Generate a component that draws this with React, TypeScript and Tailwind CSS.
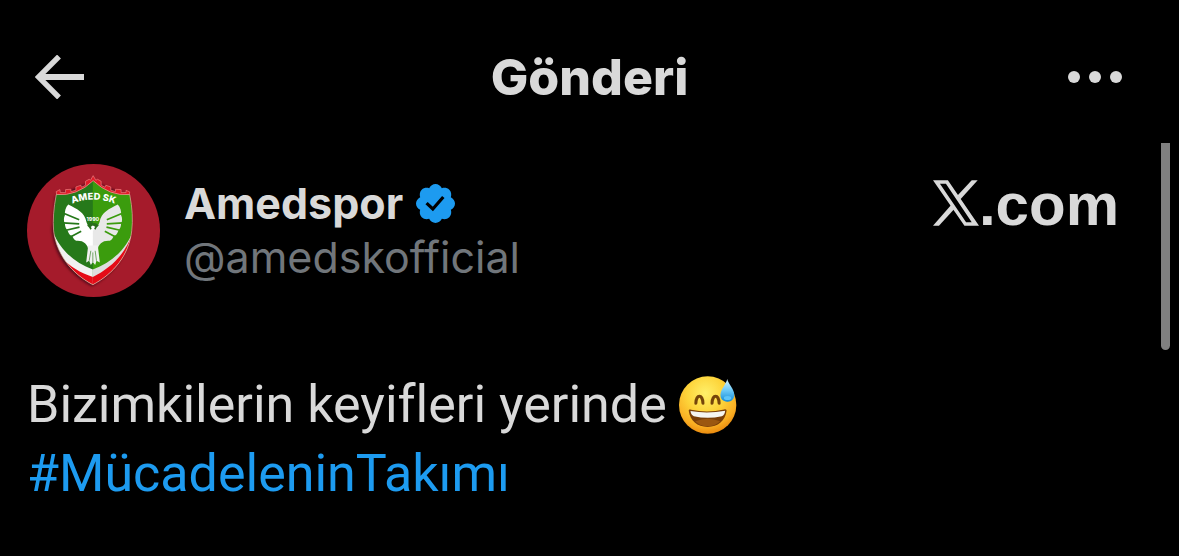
const BackIcon = () => (
  <svg viewBox="0 0 50 44" className="w-[50px] h-11" fill="none" stroke="currentColor" aria-hidden="true">
    <path d="M24 1.5L3.5 22L24 42.5" strokeWidth="5.4" />
    <path d="M5 22H49" strokeWidth="6" />
  </svg>
);

const MoreIcon = () => (
  <svg viewBox="0 0 54 12" className="w-[54px] h-3" fill="currentColor" aria-hidden="true">
    <circle cx="6" cy="6" r="6" />
    <circle cx="27" cy="6" r="6" />
    <circle cx="48" cy="6" r="6" />
  </svg>
);

const VerifiedBadge = () => (
  <svg viewBox="1.75 1.75 20.5 20.5" className="size-[39px] shrink-0" role="img" aria-label="Onaylı hesap">
    <path
      fill="#1d9bf0"
      d="M22.25 12c0-1.43-.88-2.67-2.19-3.34.46-1.39.2-2.9-.81-3.91s-2.52-1.27-3.91-.81c-.66-1.31-1.91-2.19-3.34-2.19s-2.67.88-3.33 2.19c-1.4-.46-2.91-.2-3.92.81s-1.26 2.52-.8 3.91c-1.31.67-2.2 1.91-2.2 3.34s.89 2.67 2.2 3.34c-.46 1.39-.21 2.9.8 3.91s2.52 1.26 3.91.81c.67 1.31 1.91 2.19 3.34 2.19s2.68-.88 3.34-2.19c1.39.45 2.9.2 3.91-.81s1.27-2.52.81-3.91c1.31-.67 2.19-1.91 2.19-3.34z"
    />
    <path d="M7.3 11.8l3.3 3.1 5.5-6.3" fill="none" stroke="#000" strokeWidth="1.7" />
  </svg>
);

const XLogo = () => (
  <svg viewBox="38 150 139 138" className="size-[46px]" fill="currentColor" aria-hidden="true">
    <path fillRule="evenodd" d="M38 150H83L177 288H133ZM59 161L138 277H155L77 161Z" />
    <path d="M155 150H173L121 208L112 196Z" />
    <path d="M38 288H56L105 234L96 221Z" />
  </svg>
);

const SweatSmile = () => (
  <svg viewBox="53 45 172 172" className="size-[58px] shrink-0" role="img" aria-label="Soğuk terli gülen yüz">
    <defs>
      <radialGradient id="face" cx="0.46" cy="0.3" r="0.72">
        <stop offset="0" stopColor="#fff06a" />
        <stop offset="0.45" stopColor="#fdd43a" />
        <stop offset="0.8" stopColor="#f9ad22" />
        <stop offset="1" stopColor="#e8860c" />
      </radialGradient>
      <linearGradient id="drop" x1="0" y1="0" x2="0" y2="1">
        <stop offset="0" stopColor="#d5f3ff" />
        <stop offset="0.5" stopColor="#6cc9f7" />
        <stop offset="1" stopColor="#128bd8" />
      </linearGradient>
    </defs>
    <circle cx="138" cy="131" r="85" fill="url(#face)" />
    <g fill="none" stroke="#75450a" strokeWidth="9" strokeLinecap="round">
      <path d="M103 126C104 98 123 98 124 126" />
      <path d="M151 126C152 98 171 98 172 126" />
    </g>
    <path d="M82 149C81 145 84 143 89 145Q138 156 187 144C192 142 195 145 194 149C190 178 169 196 138 196S86 178 82 149Z" fill="#7a3f08" />
    <path d="M87 149Q138 158 190 148C189 157 186 162 180 164Q138 173 97 164C91 162 88 157 87 149Z" fill="#f5f5f1" />
    <path d="M101 179Q138 164 175 179Q161 194 138 194T101 179Z" fill="#9b5710" />
    <path d="M196 54C199 68 218 85 217 102C216 115 207 122 196 121C184 121 175 113 176 100C177 84 193 69 196 54Z" fill="url(#drop)" />
    <ellipse cx="197" cy="110" rx="11" ry="6" fill="#5cc4f8" />
  </svg>
);

// One half of the eagle, mirrored for the other side
const wing =
  'M157 149C182 162 207 172 212 202C215 214 223 220 232 221V294L218 288C216 268 203 258 186 258C179 258 174 254 171 247L168 243C162 241 158 236 156 229C150 222 147 214 147 207C143 198 143 189 147 181C146 169 149 158 157 149Z';
const feathers = 'M143 175L190 195M141 204L190 207M147 227L191 217M162 247L196 229';

const Avatar = () => (
  <svg viewBox="33 27 400 400" className="size-[133px] shrink-0 rounded-full" role="img" aria-label="Amedspor">
    <defs>
      <clipPath id="shield">
        <path d="M121 119Q184 124 232 77Q280 124 342 119Q354 180 348 228C340 300 294 357 231 390C168 357 122 300 113 228Q109 180 121 119Z" />
      </clipPath>
      <filter id="shade" x="-20%" y="-20%" width="140%" height="140%">
        <feGaussianBlur stdDeviation="5" />
      </filter>
    </defs>
    <rect x="33" y="27" width="400" height="400" fill="#a51b2b" />
    <path
      d="M118 124L232 80L340 124Q350 180 344 232C334 304 290 360 228 394C160 357 116 304 109 228Z"
      fill="#430812"
      filter="url(#shade)"
    />
    <path
      d="M121 110L132 104L133 113L149 113V104L165 103V110L180 106V96L195 91L197 97L209 91V79L220 73L224 76L232 62L240 76L245 73L256 79V91L268 97L270 91L285 96V106L299 110V103L316 104V113L331 113V106L342 111L339 125H123Z"
      fill="#df1b28"
      stroke="#ef8585"
      strokeWidth="2"
    />
    <g clipPath="url(#shield)">
      <rect x="108" y="70" width="124" height="330" fill="#26791a" />
      <rect x="231" y="70" width="124" height="330" fill="#3b9c0d" />
      <path d="M108 222C128 282 174 324 231 344V400H108Z" fill="#f2f2f2" />
      <path d="M354 222C334 282 288 324 231 344V400H354Z" fill="#dedede" />
      <path d="M108 268C136 320 180 350 231 367V400H108Z" fill="#e50b17" />
      <path d="M354 225C332 296 288 338 231 367V400H354Z" fill="#e50b17" />
    </g>
    <path
      d="M121 119Q184 124 232 77Q280 124 342 119Q354 180 348 228C340 300 294 357 231 390C168 357 122 300 113 228Q109 180 121 119Z"
      fill="none"
      stroke="#eeb0a8"
      strokeWidth="2"
    />
    <path d={wing} fill="#fff" />
    <path d={feathers} stroke="#26791a" strokeWidth="5" />
    <g transform="translate(463 0) scale(-1 1)">
      <path d={wing} fill="#e8e8e8" />
      <path d={feathers} stroke="#3b9c0d" strokeWidth="5" />
    </g>
    <path d="M217 272L211 323L220 318L225 331L231 322L238 331L242 318L252 323L246 272Z" fill="#f1f1f1" />
    <path d="M214 212Q222 203 231 205Q240 203 249 212L243 217L239 225L231 219L224 225L219 217Z" fill="#286d1b" />
    <path d="M225 216L231 212L238 216L231 229Z" fill="#fff" />
    <path d="M225 288L220 318M238 288L242 318M231 293V322" stroke="#347f21" strokeWidth="2" />
    <path id="clubArc" d="M160 150Q232 118 306 150" fill="none" />
    <text fill="#fff" fontSize="28" fontWeight="800" fontFamily="Inter, sans-serif">
      <textPath href="#clubArc" startOffset="50%" textAnchor="middle">AMED SK</textPath>
    </text>
    <text x="231" y="198" textAnchor="middle" fill="#fff" fontSize="16" fontWeight="700" fontFamily="Inter, sans-serif">
      1990
    </text>
  </svg>
);

const App = () => {
  return (
    <div className="relative min-h-screen bg-black text-[#d9d9d9] font-['Inter',sans-serif]">
      <header className="grid grid-cols-[1fr_auto_1fr] items-center pt-11 px-[35px]">
        <button type="button" aria-label="Geri" className="justify-self-start">
          <BackIcon />
        </button>
        <h1 className="text-[50px] leading-[66px] font-extrabold">Gönderi</h1>
        <button type="button" aria-label="Daha fazla" className="justify-self-end pr-[22px]">
          <MoreIcon />
        </button>
      </header>

      <main>
        <article className="pl-[27px] pr-15 pt-[54px]">
          <div className="flex items-start gap-6">
            <Avatar />
            <div className="min-w-0 flex-1 pt-3">
              <div className="flex items-center gap-[13px]">
                <span className="text-[43px] leading-[54px] font-bold">Amedspor</span>
                <VerifiedBadge />
              </div>
              <a href="#profile" className="block text-[43px] leading-[54px] text-[#71767b]">
                @amedskofficial
              </a>
            </div>
            <a href="#x" aria-label="X.com" className="flex items-start pt-4">
              <XLogo />
              <span className="font-['Liberation_Sans',Arial,sans-serif] text-[60px] leading-[50px] font-bold">.com</span>
            </a>
          </div>

          <p className="pt-[73px] font-['Roboto',sans-serif] text-[52px] leading-[69px] [font-variant-ligatures:none]">
            <span className="flex items-center gap-3">
              Bizimkilerin keyifleri yerinde
              <SweatSmile />
            </span>
            <a href="#hashtag" className="text-[#1d9bf0]">
              #MücadeleninTakımı
            </a>
          </p>
        </article>
      </main>

      <div className="absolute top-[143px] right-[9px] h-[207px] w-[9px] rounded-b-full bg-[#808080]" />
    </div>
  );
};

export default App;
